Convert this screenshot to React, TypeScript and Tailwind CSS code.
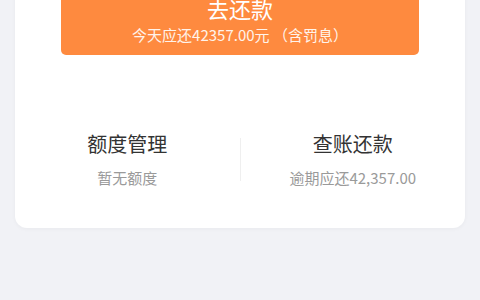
export default function App() {
  return (
    <div
      className="h-[300px] w-[480px] overflow-hidden bg-[#f1f2f6]"
      style={{ fontFamily: '"Noto Sans CJK SC", "Noto Sans", sans-serif' }}
    >
      <div className="mx-[15px] -mt-[40px] rounded-[12px] bg-white pt-[20px] pb-[40px] shadow-[0_1px_4px_rgba(0,0,0,0.04)]">
        {/* Repay button */}
        <div className="mx-[46px] flex flex-col items-center rounded-[5px] bg-[#fe8a3f] pt-[14px] pb-[10px] text-white">
          <div className="text-[22px] leading-[28px]">去还款</div>
          <div className="mt-[3px] text-[15px] leading-[20px] text-[#fff3ea]">
            今天应还42357.00元 （含罚息）
          </div>
        </div>

        {/* Bottom actions */}
        <div className="mt-[75px] flex items-center">
          <div className="flex flex-1 flex-col items-center">
            <div className="text-[20px] leading-[28px] text-[#333333]">额度管理</div>
            <div className="mt-[10px] text-[15px] leading-[20px] text-[#9a9a9a]">暂无额度</div>
          </div>
          <div className="h-[43px] w-px bg-[#efefef]" />
          <div className="flex flex-1 flex-col items-center">
            <div className="text-[20px] leading-[28px] text-[#333333]">查账还款</div>
            <div className="mt-[10px] text-[15px] leading-[20px] text-[#9a9a9a]">逾期应还42,357.00</div>
          </div>
        </div>
      </div>
    </div>
  );
}
